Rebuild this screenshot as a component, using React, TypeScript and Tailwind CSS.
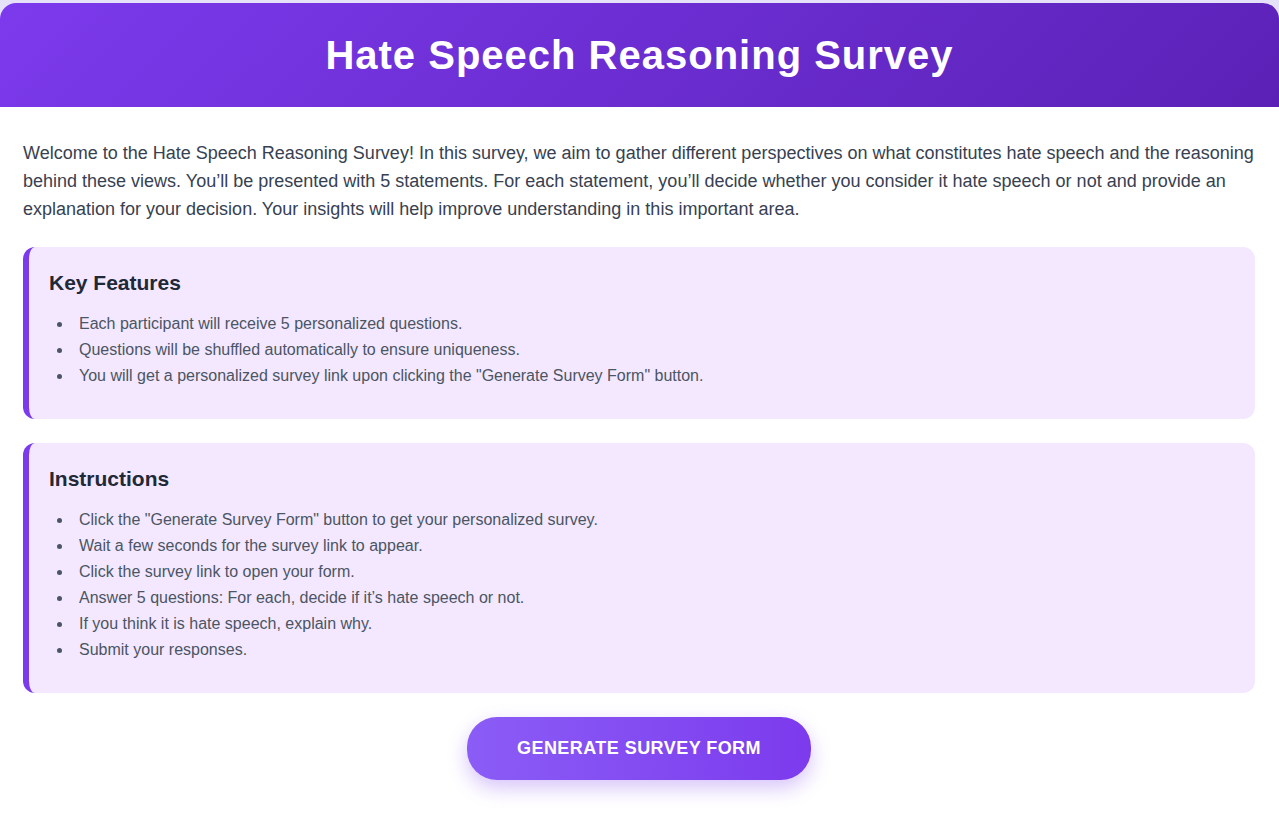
const features = [
  "Each participant will receive 5 personalized questions.",
  "Questions will be shuffled automatically to ensure uniqueness.",
  'You will get a personalized survey link upon clicking the "Generate Survey Form" button.',
];

const instructions = [
  'Click the "Generate Survey Form" button to get your personalized survey.',
  "Wait a few seconds for the survey link to appear.",
  "Click the survey link to open your form.",
  "Answer 5 questions: For each, decide if it’s hate speech or not.",
  "If you think it is hate speech, explain why.",
  "Submit your responses.",
];

function InfoCard({ title, items }: { title: string; items: string[] }) {
  return (
    <section className="mb-6 rounded-xl border-l-6 border-[#7c3aed] bg-[#f3e8ff] px-5 pt-5 pb-[30px]">
      <h2 className="mb-3 text-[21px] leading-8 font-bold text-[#1f2937]">{title}</h2>
      <ul className="list-disc pl-6 text-base leading-[26px] text-[#4b5563]">
        {items.map((item) => (
          <li key={item} className="pl-[6px]">
            {item}
          </li>
        ))}
      </ul>
    </section>
  );
}

export default function App() {
  return (
    <div className="min-h-screen overflow-hidden bg-[#e5e1f8] pt-[3px] font-['Liberation_Sans',Arial,sans-serif]">
      <main className="min-h-screen overflow-hidden rounded-t-2xl bg-white">
        <header className="bg-linear-135 from-[#7c3aed] to-[#5b21b6] px-6 py-5 text-center">
          <h1 className="text-[40px] leading-[64px] font-bold tracking-[1px] text-white">
            Hate Speech Reasoning Survey
          </h1>
        </header>
        <div className="px-6 pt-8 pl-[23px]">
          <p className="mb-6 text-lg leading-7 text-[#374151]">
            Welcome to the Hate Speech Reasoning Survey! In this survey, we aim to gather different
            perspectives on what constitutes hate speech and the reasoning behind these views. You’ll
            be presented with 5 statements. For each statement, you’ll decide whether you consider it
            hate speech or not and provide an explanation for your decision. Your insights will help
            improve understanding in this important area.
          </p>
          <InfoCard title="Key Features" items={features} />
          <InfoCard title="Instructions" items={instructions} />
          <div className="flex justify-center pb-8">
            <button
              type="button"
              className="rounded-[30px] bg-linear-to-r from-[#8b5cf6] to-[#7c3aed] px-[50px] py-[18px] text-lg leading-[27px] font-bold tracking-wide text-white uppercase shadow-[0_8px_20px_rgba(124,58,237,0.3)]"
            >
              Generate Survey Form
            </button>
          </div>
        </div>
      </main>
    </div>
  );
}
